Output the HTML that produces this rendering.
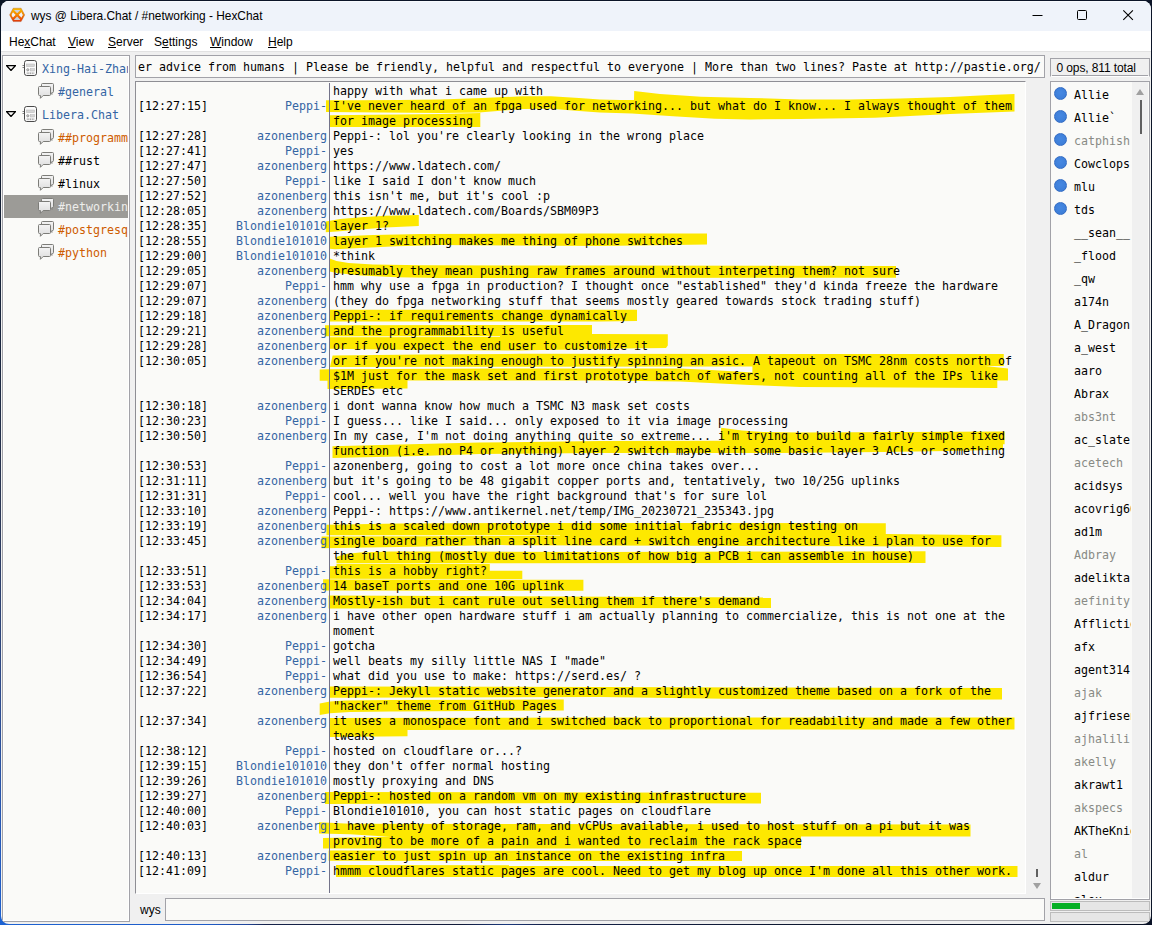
<!DOCTYPE html>
<html lang="en">
<head>
<meta charset="utf-8">
<title>wys @ Libera.Chat / #networking - HexChat</title>
<style>
html,body{margin:0;padding:0}
body{width:1152px;height:925px;overflow:hidden;position:relative;
 background:#0c1528;
 font-family:"Liberation Sans",sans-serif;font-size:12px;color:#000}
#desk-l{position:absolute;left:0;top:0;width:12px;height:925px;
 background:linear-gradient(180deg,#0b1626 0,#1a2740 40%,#2a3654 55%,#2c4a8c 75%,#2458b8 90%,#1c60d0 100%)}
#desk-b{position:absolute;left:0;top:912px;width:1152px;height:13px;
 background:linear-gradient(90deg,#1c62d2 0,#1e5cc8 18%,#20459a 21.5%,#16234a 23%,#121c3a 40%,#1a3a80 44%,#14224a 47%,#0e1830 70%,#0a1226 100%)}
#win{position:absolute;left:1px;top:1px;width:1150px;height:922.6px;background:#f0f0f0;
 border-radius:8px 8px 8px 8px;overflow:hidden}
#title{position:absolute;left:0;top:0;width:1150px;height:30px;background:#eff3fa;box-shadow:inset 0 1px 0 #f8fafd}
#title .tx{position:absolute;left:30px;top:0;line-height:30px;font-size:11.9px;white-space:nowrap;letter-spacing:0}
#menu{position:absolute;left:0;top:30px;width:1150px;height:20px;background:#fff;border-bottom:1px solid #e2e2e2}
#menu span{position:absolute;top:1px;line-height:21px;font-size:12px;white-space:nowrap}
#menu u{text-decoration:underline;text-underline-offset:1px}
.mono,.r,.tr,.u,#topic{font-family:"DejaVu Sans Mono","Liberation Mono",monospace;font-size:11.63px;letter-spacing:0;white-space:pre}
.box{position:absolute;box-sizing:border-box;background:#fafaf8;border:1px solid #a2a2a8}
/* tree */
#tree{left:1px;top:54px;width:128px;height:867px;overflow:hidden;box-shadow:inset 0 0 0 1px #fff}
.tr{position:relative;height:23px;line-height:23px;margin:0 1px;overflow:hidden}
#tree .pad{height:1px}
.tr .lb{position:absolute;top:1px;left:38px}
.tr.ch .lb{left:54px}
.tr.b{color:#3465a4}.tr.o{color:#ce5c00}.tr.k{color:#000}
.tr.sel{background:#9c9b97;color:#eeeeec}
.tr .ar{position:absolute;left:1.6px;top:7.6px;width:10px;height:6px;fill:#fafaf8;stroke:#000;stroke-width:1.4;stroke-linejoin:miter}
.tr .ic{position:absolute;left:16px;top:2px;width:18px;height:18px}
.tr.ch .ic{left:33px;top:1px;width:18px;height:18px}
/* topic */
#topic{left:134px;top:54px;width:910px;height:23px;line-height:21px;overflow:hidden}
#topic span{position:absolute;left:2px;top:1px}
/* chat */
#chat{left:134px;top:80px;width:891px;height:813px;border-color:#8e8e94 #fff #fff #8e8e94;overflow:hidden}
#sep{position:absolute;left:193px;top:1px;width:1px;height:811px;background:#73738a}
#rows{position:absolute;left:0;top:2px;width:889px}
.r{position:relative;height:15px;line-height:15px}
.r span{position:absolute;top:0}
.r .t{left:2px}
.r .n{right:698px;color:#3465a4}
.r .m{left:197px}
#hl{position:absolute;left:-1px;top:-1px;width:891px;height:813px}
/* chat scrollbar */
.sbt{position:absolute;background:#606060}
.sba{position:absolute;width:0;height:0;border-left:4.5px solid transparent;border-right:4.5px solid transparent}
/* users */
#ucount{left:1049px;top:57px;width:100px;height:19px;background:#f0f0f0;border-color:#a2a2a8 #a2a2a8 #fff #a2a2a8;text-align:left;padding:1px 0 0 5.5px;line-height:17px;font-size:12px;letter-spacing:-0.12px;white-space:nowrap}
#ucount:after{content:"";position:absolute;left:1px;right:1px;bottom:0px;height:1px;background:#a2a2a8}
#users{left:1049px;top:80px;width:100px;height:819px;overflow:hidden}
#users .trough{position:absolute;left:81px;top:0;width:16px;height:817px;background:#f0f0f0}
#users .bl{position:absolute;left:0;bottom:0;width:98px;height:1px;background:#fff;z-index:3}
.u{position:relative;height:23px;line-height:23px;width:80px;overflow:hidden}
.u span{position:absolute;left:23px;top:1px}
.u.aw{color:#888a85}
.dot{position:absolute;left:3px;top:4px;width:13px;height:13px;border-radius:50%;box-sizing:border-box;
 background:radial-gradient(circle at 50% 42%,#4688e2 0,#3f80da 60%,#3a78d0 100%);border:1px solid #336cc4}
/* input */
#nick{position:absolute;left:139px;top:898px;line-height:23px;font-size:12px}
#input{left:164px;top:897px;width:880px;height:23px}
.pb{position:absolute;box-sizing:border-box;left:1049px;width:100px;height:10px;background:#e6e6e6;border:1px solid #bcbcbc}
.pb i{position:absolute;left:1px;top:1px;height:6px;width:28px;background:#06b025}
</style>
</head>
<body>
<div id="desk-l"></div><div id="desk-b"></div>
<div id="win">
<svg width="0" height="0" style="position:absolute">
 <defs>
  <linearGradient id="g1" x1="0" y1="0" x2="0" y2="1"><stop offset="0" stop-color="#f4f4f4"/><stop offset="1" stop-color="#dcdcdc"/></linearGradient>
  <symbol id="i-srv" viewBox="0 0 18 18">
   <path d="M2.5 6.5H5M2.5 8.5H5M13 6.5h2.6M13 8.5h2.6" stroke="#666" stroke-width="0.8" fill="none"/>
   <rect x="4.5" y="1.5" width="12" height="15" rx="2.2" fill="#fbfbfb" stroke="#4a4a4a" stroke-width="1"/>
   <rect x="6.5" y="5" width="8" height="2.6" fill="#d6d6d6" stroke="#b4b4b4" stroke-width="0.5"/>
   <rect x="10.3" y="9.6" width="4.2" height="2.4" fill="#d6d6d6" stroke="#b4b4b4" stroke-width="0.5"/>
   <circle cx="7.8" cy="10.8" r="1.1" fill="#ddd" stroke="#777" stroke-width="0.7"/>
   <rect x="6.3" y="13.3" width="8.4" height="1.8" fill="#dedede"/>
   <path d="M8 13.5v1.6M10.4 13.5v1.6M12.8 13.5v1.6" stroke="#8a8a8a" stroke-width="0.7"/>
  </symbol>
  <symbol id="i-ch" viewBox="0 0 18 18">
   <path d="M5.5 2.5h10a1 1 0 0 1 1 1v7a1 1 0 0 1-1 1h-.6v1.9l-1.9-1.9H5.5a1 1 0 0 1-1-1v-7a1 1 0 0 1 1-1z" fill="url(#g1)" stroke="#7c7c78" stroke-width="1"/>
   <path d="M2.5 5.5h10a1 1 0 0 1 1 1v7a1 1 0 0 1-1 1H6.2L3.4 17.3V14.5H2.5a1 1 0 0 1-1-1v-7a1 1 0 0 1 1-1z" fill="url(#g1)" stroke="#7c7c78" stroke-width="1"/>
  </symbol>
 </defs>
</svg>
<div id="title">
 <svg style="position:absolute;left:7px;top:6px" width="19" height="16" viewBox="8 7 19 16">
  <defs><linearGradient id="hx" gradientUnits="userSpaceOnUse" x1="0" y1="8" x2="0" y2="22"><stop offset="0" stop-color="#f7c000"/><stop offset=".45" stop-color="#f68a00"/><stop offset="1" stop-color="#df2f0c"/></linearGradient></defs>
  <path d="M9.6 14.9 13.2 8.2H21.1L24.7 14.9 21.1 21.6H13.2Z" fill="url(#hx)" stroke="#a8480a" stroke-opacity=".55" stroke-width=".6"/>
  <path d="M11.6 14.9 14.3 9.9H20L22.7 14.9 20 19.9H14.3Z" fill="#cdd1da"/>
  <path d="M11.6 14.9 13.55 11.3 17.15 14.9 13.55 18.5ZM22.7 14.9 20.75 11.3 17.15 14.9 20.75 18.5Z" fill="#f1f3f8"/>
  <path d="M12.6 10.3 21.7 19.5M21.7 10.3 12.6 19.5" stroke="url(#hx)" stroke-width="2.3" fill="none"/>
 </svg>
 <span class="tx">wys @ Libera.Chat / #networking - HexChat</span>
 <svg style="position:absolute;left:1026px;top:0" width="124" height="30" viewBox="0 0 124 30">
  <path d="M5.5 14.5h10" stroke="#000" stroke-width="1" fill="none"/>
  <rect x="50.5" y="9.5" width="9" height="9" rx="1" fill="none" stroke="#000" stroke-width="1"/>
  <path d="M96.3 9.3l9.6 9.6M105.9 9.3l-9.6 9.6" stroke="#000" stroke-width="1.1" fill="none"/>
 </svg>
</div>
<div id="menu">
 <span style="left:8px">He<u>x</u>Chat</span>
 <span style="left:67px"><u>V</u>iew</span>
 <span style="left:107px"><u>S</u>erver</span>
 <span style="left:153px">S<u>e</u>ttings</span>
 <span style="left:209px"><u>W</u>indow</span>
 <span style="left:267px"><u>H</u>elp</span>
</div>
<div id="tree" class="box"><div class="pad"></div>
<div class="tr srv b"><svg class="ar" viewBox="0 0 10 6"><path d="M0.6 0.6 H9.4 L5 5.4 Z"/></svg><svg class="ic"><use href="#i-srv"/></svg><span class="lb">Xing-Hai-Zhan</span></div>
<div class="tr ch b"><svg class="ic"><use href="#i-ch"/></svg><span class="lb">#general</span></div>
<div class="tr srv b"><svg class="ar" viewBox="0 0 10 6"><path d="M0.6 0.6 H9.4 L5 5.4 Z"/></svg><svg class="ic"><use href="#i-srv"/></svg><span class="lb">Libera.Chat</span></div>
<div class="tr ch o"><svg class="ic"><use href="#i-ch"/></svg><span class="lb">##programming</span></div>
<div class="tr ch k"><svg class="ic"><use href="#i-ch"/></svg><span class="lb">##rust</span></div>
<div class="tr ch k"><svg class="ic"><use href="#i-ch"/></svg><span class="lb">#linux</span></div>
<div class="tr ch sel"><svg class="ic"><use href="#i-ch"/></svg><span class="lb">#networking</span></div>
<div class="tr ch o"><svg class="ic"><use href="#i-ch"/></svg><span class="lb">#postgresql</span></div>
<div class="tr ch o"><svg class="ic"><use href="#i-ch"/></svg><span class="lb">#python</span></div>
</div>
<div id="topic" class="box"><span>er advice from humans | Please be friendly, helpful and respectful to everyone | More than two lines? Paste at http://pastie.org/</span></div>
<div id="chat" class="box">
<svg id="hl" viewBox="135 81 891 813" fill="#fde800">
<path d="M326 100.3L360 100.2L400 100L440 99.6L482 97.9L523 96.3L551 96.2L579 97.9L600 99.6L620 100L634 100L634.2 90.9L660 94L701 96.8L750 97.9L800 99.5L850 99.5L900 98.5L950 97L990 95L1014.5 94L1014.5 111.5L950 114L900 116.5L875 117.75L800 119L750 119.4L715 118.7L673 116.2L632 113.4L600 112.5L579 111.1L551 108.7L523 109L482 112.3L480.3 112.5L440 113L326 112Z"/>
<path d="M330 115.2L440 114L480.3 113L480.3 127L330 127Z"/>
<path d="M325.8 221.4L340 219L361 217.2L385 215.7L418.8 215L418.8 225.9L385 227.5L355 229.9L336.5 231.5L325.8 232.3Z"/>
<path d="M329.8 236.8L373 235.1L421.5 233.9L600 233.5L707 233.5L707 244.5L600 246L470 245.3L440 245.1L397 246.3L360 248.1L335 249.2L329.8 248.8Z"/>
<path d="M329.8 258.5L336.5 260.9L348.6 263.1L373 264.5L421.5 265.2L600 265.6L896 266L896 277.75L600 277.9L440 277.9L397 277.3L361 275.5L336.5 273L329.8 271.5Z"/>
<path d="M329.2 309.8L637 309.7L637 321.1L600 321.4L329.2 321.4Z"/>
<path d="M325 325.2L592 325L592 334L667.8 334.3L667.8 345.6L666 347.9L623 348.6L580 349.5L540 350L520 350.5L420 350L329.2 348.8L329.2 337.2L500 337L500 336.3L325 336.2Z"/>
<path d="M332.6 355.4L420 354.6L520 353.8L1003.75 354L1003.75 366L752.5 366.4L330 366.9Z"/>
<path d="M319.7 369.6L330 369.3L500 368.6L680 368.4L711 370L752.4 372.6L752.4 366L983 365.8L1008 368.5L1008 380.4L997.3 380.4L997.3 388L900 387.5L800 387L750 385L680 381.5L600 380.6L407.5 380.6L407.5 388.6L327.5 389L327.5 380.8L319.7 380.8Z"/>
<path d="M332.5 446.2L420 444.1L480 442.6L600 441L721 440.8L721.1 427.8L742 430.4L763 432L800 432.5L1004.6 431.4L1004.6 444.2L1003 444.2L1003 449.8L947 451L884 452.1L780 453.1L600 453L480 454L420 455.9L332.5 457.9Z"/>
<path d="M326.5 524.7L400 523.6L500 522.9L885.8 523.2L885.8 534L1001.4 535.3L1001.4 547L860 546.3L600 545.5L500 545.1L400 547L321.6 548.3L321.6 536.4L560 535.8L560 535.2L326.5 535.3Z"/>
<path d="M336.5 557L345 554L360 552.5L390 551.5L470 551.5L600 552L925.5 551.25L925.5 563L336.5 563.3Z"/>
<path d="M329.2 566.3L336.5 566.3L336.5 563.9L489.8 563.9L489.8 570.8L522.3 570.8L522.3 579L329.2 578.7Z"/>
<path d="M323.1 579.3L345 579.6L583.4 579.8L583.4 590.8L323.1 590.4Z"/>
<path d="M328.6 595.4L771 597.5L771 608L328.6 608.5Z"/>
<path d="M329.7 686.6L600 687L1002 688L1002 699.5L888 700L725 698.75L600 697L329.7 697.7Z"/>
<path d="M319.7 703.4L330 701.5L345 700.5L390 700L563.75 699.5L563.75 710.5L390 711.5L350 712L330 713.3L319.7 715Z"/>
<path d="M329.2 717.9L600 717.6L1014.5 717.5L1014.5 729.5L600 729.5L407.5 730L407.5 736.3L329.2 737Z"/>
<path d="M325 791.9L600 792.5L761 792.75L761 803.5L600 803L325 804Z"/>
<path d="M319 822.2L350 823.7L970.5 824.5L970.5 836.5L801 836.5L801 848.5L600 848.6L323 848.6L323 838.1L390 836.8L350 834.3L319 833.4Z"/>
<path d="M328.6 850.4L742 851L742 861L328.6 860.8Z"/>
<path d="M336 865.1L1017.5 865.25L1017.5 877L336 877Z"/>
</svg>
<div id="sep"></div>
<div id="rows">
<div class="r"><span class="m">happy with what i came up with</span></div>
<div class="r"><span class="t">[12:27:15]</span><span class="n">Peppi-</span><span class="m">I've never heard of an fpga used for networking... but what do I know... I always thought of them</span></div>
<div class="r"><span class="m">for image processing</span></div>
<div class="r"><span class="t">[12:27:28]</span><span class="n">azonenberg</span><span class="m">Peppi-: lol you're clearly looking in the wrong place</span></div>
<div class="r"><span class="t">[12:27:41]</span><span class="n">Peppi-</span><span class="m">yes</span></div>
<div class="r"><span class="t">[12:27:47]</span><span class="n">azonenberg</span><span class="m">https://www.ldatech.com/</span></div>
<div class="r"><span class="t">[12:27:50]</span><span class="n">Peppi-</span><span class="m">like I said I don't know much</span></div>
<div class="r"><span class="t">[12:27:52]</span><span class="n">azonenberg</span><span class="m">this isn't me, but it's cool :p</span></div>
<div class="r"><span class="t">[12:28:05]</span><span class="n">azonenberg</span><span class="m">https://www.ldatech.com/Boards/SBM09P3</span></div>
<div class="r"><span class="t">[12:28:35]</span><span class="n">Blondie101010</span><span class="m">layer 1?</span></div>
<div class="r"><span class="t">[12:28:55]</span><span class="n">Blondie101010</span><span class="m">layer 1 switching makes me thing of phone switches</span></div>
<div class="r"><span class="t">[12:29:00]</span><span class="n">Blondie101010</span><span class="m">*think</span></div>
<div class="r"><span class="t">[12:29:05]</span><span class="n">azonenberg</span><span class="m">presumably they mean pushing raw frames around without interpeting them? not sure</span></div>
<div class="r"><span class="t">[12:29:07]</span><span class="n">Peppi-</span><span class="m">hmm why use a fpga in production? I thought once "established" they'd kinda freeze the hardware</span></div>
<div class="r"><span class="t">[12:29:07]</span><span class="n">azonenberg</span><span class="m">(they do fpga networking stuff that seems mostly geared towards stock trading stuff)</span></div>
<div class="r"><span class="t">[12:29:18]</span><span class="n">azonenberg</span><span class="m">Peppi-: if requirements change dynamically</span></div>
<div class="r"><span class="t">[12:29:21]</span><span class="n">azonenberg</span><span class="m">and the programmability is useful</span></div>
<div class="r"><span class="t">[12:29:28]</span><span class="n">azonenberg</span><span class="m">or if you expect the end user to customize it</span></div>
<div class="r"><span class="t">[12:30:05]</span><span class="n">azonenberg</span><span class="m">or if you're not making enough to justify spinning an asic. A tapeout on TSMC 28nm costs north of</span></div>
<div class="r"><span class="m">$1M just for the mask set and first prototype batch of wafers, not counting all of the IPs like</span></div>
<div class="r"><span class="m">SERDES etc</span></div>
<div class="r"><span class="t">[12:30:18]</span><span class="n">azonenberg</span><span class="m">i dont wanna know how much a TSMC N3 mask set costs</span></div>
<div class="r"><span class="t">[12:30:23]</span><span class="n">Peppi-</span><span class="m">I guess... like I said... only exposed to it via image processing</span></div>
<div class="r"><span class="t">[12:30:50]</span><span class="n">azonenberg</span><span class="m">In my case, I'm not doing anything quite so extreme... i'm trying to build a fairly simple fixed</span></div>
<div class="r"><span class="m">function (i.e. no P4 or anything) layer 2 switch maybe with some basic layer 3 ACLs or something</span></div>
<div class="r"><span class="t">[12:30:53]</span><span class="n">Peppi-</span><span class="m">azonenberg, going to cost a lot more once china takes over...</span></div>
<div class="r"><span class="t">[12:31:11]</span><span class="n">azonenberg</span><span class="m">but it's going to be 48 gigabit copper ports and, tentatively, two 10/25G uplinks</span></div>
<div class="r"><span class="t">[12:31:31]</span><span class="n">Peppi-</span><span class="m">cool... well you have the right background that's for sure lol</span></div>
<div class="r"><span class="t">[12:33:10]</span><span class="n">azonenberg</span><span class="m">Peppi-: https://www.antikernel.net/temp/IMG_20230721_235343.jpg</span></div>
<div class="r"><span class="t">[12:33:19]</span><span class="n">azonenberg</span><span class="m">this is a scaled down prototype i did some initial fabric design testing on</span></div>
<div class="r"><span class="t">[12:33:45]</span><span class="n">azonenberg</span><span class="m">single board rather than a split line card + switch engine architecture like i plan to use for</span></div>
<div class="r"><span class="m">the full thing (mostly due to limitations of how big a PCB i can assemble in house)</span></div>
<div class="r"><span class="t">[12:33:51]</span><span class="n">Peppi-</span><span class="m">this is a hobby right?</span></div>
<div class="r"><span class="t">[12:33:53]</span><span class="n">azonenberg</span><span class="m">14 baseT ports and one 10G uplink</span></div>
<div class="r"><span class="t">[12:34:04]</span><span class="n">azonenberg</span><span class="m">Mostly-ish but i cant rule out selling them if there's demand</span></div>
<div class="r"><span class="t">[12:34:17]</span><span class="n">azonenberg</span><span class="m">i have other open hardware stuff i am actually planning to commercialize, this is not one at the</span></div>
<div class="r"><span class="m">moment</span></div>
<div class="r"><span class="t">[12:34:30]</span><span class="n">Peppi-</span><span class="m">gotcha</span></div>
<div class="r"><span class="t">[12:34:49]</span><span class="n">Peppi-</span><span class="m">well beats my silly little NAS I "made"</span></div>
<div class="r"><span class="t">[12:36:54]</span><span class="n">Peppi-</span><span class="m">what did you use to make: https://serd.es/ ?</span></div>
<div class="r"><span class="t">[12:37:22]</span><span class="n">azonenberg</span><span class="m">Peppi-: Jekyll static website generator and a slightly customized theme based on a fork of the</span></div>
<div class="r"><span class="m">"hacker" theme from GitHub Pages</span></div>
<div class="r"><span class="t">[12:37:34]</span><span class="n">azonenberg</span><span class="m">it uses a monospace font and i switched back to proportional for readability and made a few other</span></div>
<div class="r"><span class="m">tweaks</span></div>
<div class="r"><span class="t">[12:38:12]</span><span class="n">Peppi-</span><span class="m">hosted on cloudflare or...?</span></div>
<div class="r"><span class="t">[12:39:15]</span><span class="n">Blondie101010</span><span class="m">they don't offer normal hosting</span></div>
<div class="r"><span class="t">[12:39:26]</span><span class="n">Blondie101010</span><span class="m">mostly proxying and DNS</span></div>
<div class="r"><span class="t">[12:39:27]</span><span class="n">azonenberg</span><span class="m">Peppi-: hosted on a random vm on my existing infrastructure</span></div>
<div class="r"><span class="t">[12:40:00]</span><span class="n">Peppi-</span><span class="m">Blondie101010, you can host static pages on cloudflare</span></div>
<div class="r"><span class="t">[12:40:03]</span><span class="n">azonenberg</span><span class="m">i have plenty of storage, ram, and vCPUs available, i used to host stuff on a pi but it was</span></div>
<div class="r"><span class="m">proving to be more of a pain and i wanted to reclaim the rack space</span></div>
<div class="r"><span class="t">[12:40:13]</span><span class="n">azonenberg</span><span class="m">easier to just spin up an instance on the existing infra</span></div>
<div class="r"><span class="t">[12:41:09]</span><span class="n">Peppi-</span><span class="m">hmmm cloudflares static pages are cool. Need to get my blog up once I'm done all this other work.</span></div>
</div>
</div>
<div class="sbt" style="left:1035px;top:868px;width:2px;height:8px"></div>
<div class="sba" style="left:1031.5px;top:882px;border-top:6px solid #a0a0a0"></div>
<div id="ucount" class="box">0 ops, 811 total</div>
<div id="users" class="box">
<div class="trough"></div><div class="bl"></div>
<div class="sba" style="left:84.5px;top:7px;border-bottom:6px solid #a0a0a0"></div>
<div class="sbt" style="left:89px;top:18px;width:2px;height:34px"></div>
<div style="height:1px"></div>
<div class="u"><i class="dot"></i><span>Allie</span></div>
<div class="u"><i class="dot"></i><span>Allie`</span></div>
<div class="u aw"><i class="dot"></i><span>catphish</span></div>
<div class="u"><i class="dot"></i><span>Cowclops</span></div>
<div class="u"><i class="dot"></i><span>mlu</span></div>
<div class="u"><i class="dot"></i><span>tds</span></div>
<div class="u"><span>__sean__</span></div>
<div class="u"><span>_flood</span></div>
<div class="u"><span>_qw</span></div>
<div class="u"><span>a174n</span></div>
<div class="u"><span>A_Dragon</span></div>
<div class="u"><span>a_west</span></div>
<div class="u"><span>aaro</span></div>
<div class="u"><span>Abrax</span></div>
<div class="u aw"><span>abs3nt</span></div>
<div class="u"><span>ac_slater</span></div>
<div class="u aw"><span>acetech</span></div>
<div class="u"><span>acidsys</span></div>
<div class="u"><span>acovrig60</span></div>
<div class="u"><span>ad1m</span></div>
<div class="u aw"><span>Adbray</span></div>
<div class="u"><span>adelikta</span></div>
<div class="u aw"><span>aefinity</span></div>
<div class="u"><span>Affliction</span></div>
<div class="u"><span>afx</span></div>
<div class="u"><span>agent314</span></div>
<div class="u aw"><span>ajak</span></div>
<div class="u"><span>ajfriesen</span></div>
<div class="u aw"><span>ajhalili</span></div>
<div class="u aw"><span>akelly</span></div>
<div class="u"><span>akrawt1</span></div>
<div class="u aw"><span>akspecs</span></div>
<div class="u"><span>AKTheKnight</span></div>
<div class="u aw"><span>al</span></div>
<div class="u"><span>aldur</span></div>
<div class="u"><span>alex</span></div>
</div>
<div id="nick">wys</div>
<div id="input" class="box"></div>
<div class="pb" style="top:900px"><i></i></div>
<div class="pb" style="top:911px"></div>
</div>
</body>
</html>
